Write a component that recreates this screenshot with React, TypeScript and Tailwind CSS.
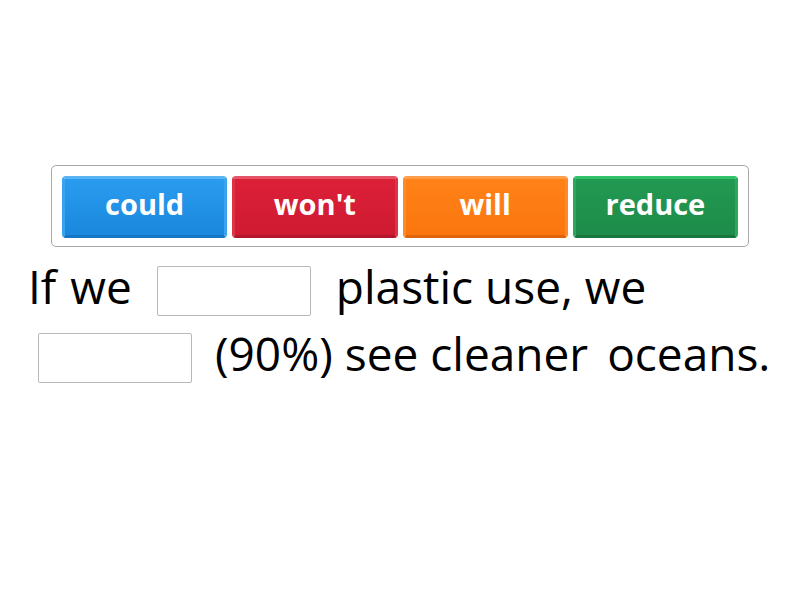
import React from "react";

const btns = [
  { t: "could", c: "bg-[linear-gradient(#2a9cf0,#1a88dc)] border-t-[#5ab4f3] border-b-[#1577c4] border-x-[#3aa3f0]" },
  { t: "won't", c: "bg-[linear-gradient(#dc2038,#cf1b32)] border-t-[#e55467] border-b-[#b3152a] border-x-[#de3247]" },
  { t: "will", c: "bg-[linear-gradient(#ff8218,#fb760f)] border-t-[#ff9d4c] border-b-[#df640a] border-x-[#ff8a2a]" },
  { t: "reduce", c: "bg-[linear-gradient(#229a52,#1e8b4a)] border-t-[#32c26a] border-b-[#19763f] border-x-[#2aa85c]" },
];

function Blank() {
  return <div className="w-[154px] h-[50px] border border-[#b8b8b8] rounded-[2px] bg-white shrink-0" />;
}

export default function App() {
  return (
    <div className="w-[800px] h-[600px] bg-white overflow-hidden" style={{ fontFamily: '"Open Sans", sans-serif' }}>
      <div className="ml-[51px] mt-[165px] w-[698px] h-[82px] border border-[#a9a9a9] rounded-[5px] pt-[10px] px-[10px] flex gap-[5px]">
        {btns.map((b) => (
          <div
            key={b.t}
            className={`flex-1 h-[62px] rounded-[4px] border-[3px] flex items-center justify-center text-white font-bold text-[29px] leading-none pb-[7px] ${b.c}`}
          >
            {b.t}
          </div>
        ))}
      </div>
      <div className="text-[46px] leading-none text-black">
        <div className="mt-[19px] flex items-center h-[50px] pl-[28px]">
          <span className="-mt-[10px]">If</span>
          <span className="-mt-[10px] ml-[14px]">we</span>
          <div className="ml-[25px]"><Blank /></div>
          <span className="-mt-[10px] ml-[25px] whitespace-pre">plastic use, we</span>
        </div>
        <div className="mt-[17px] flex items-center h-[50px] pl-[38px]">
          <Blank />
          <span className="-mt-[10px] ml-[23px] whitespace-pre">(90%) see cleaner</span>
          <span className="-mt-[10px] ml-[19px]">oceans.</span>
        </div>
      </div>
    </div>
  );
}
